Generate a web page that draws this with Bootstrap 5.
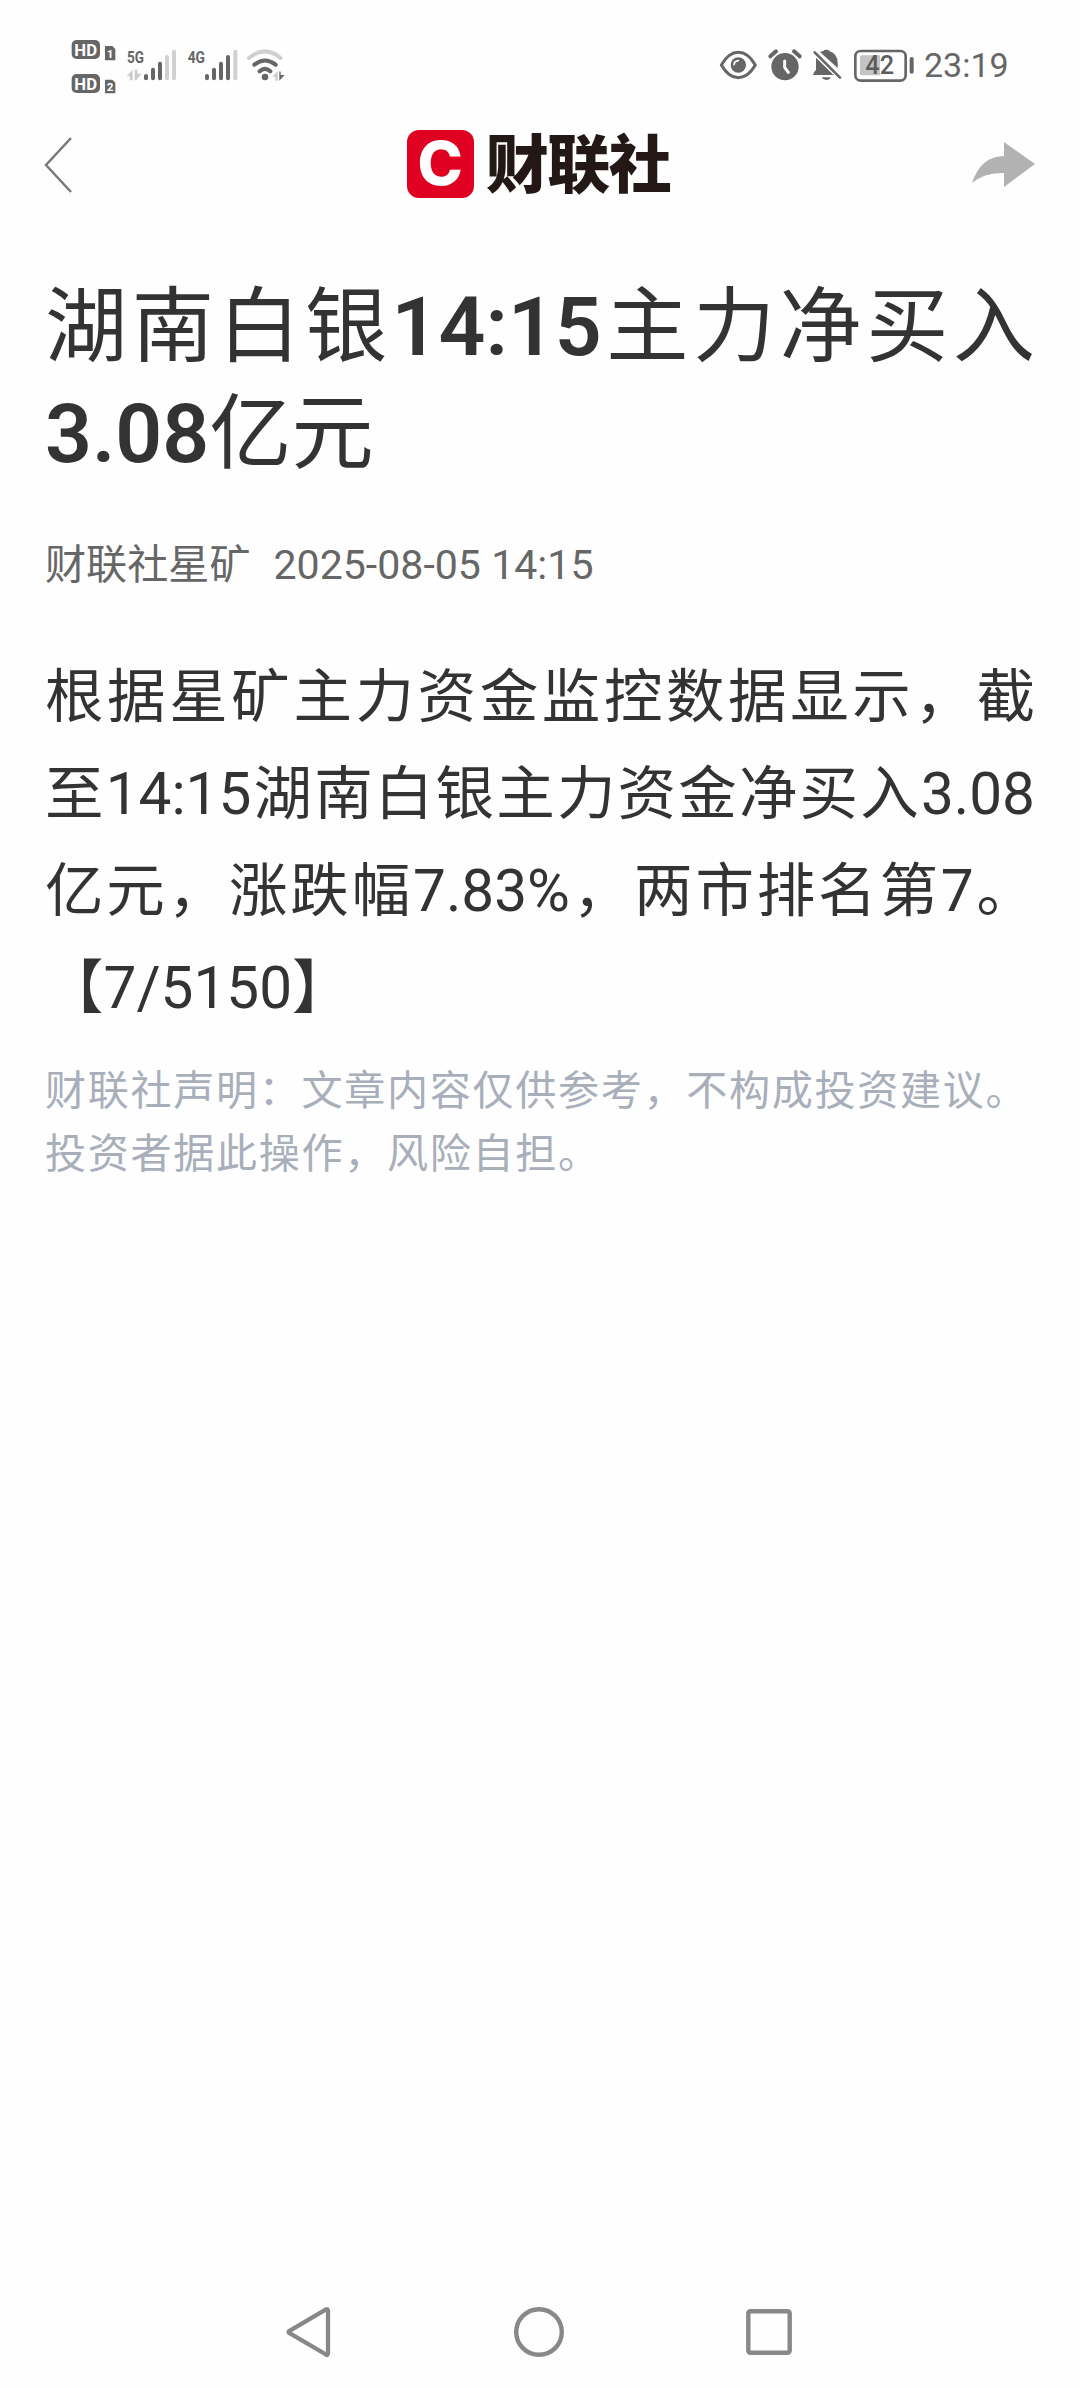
<!DOCTYPE html>
<html lang="zh-CN">
<head>
<meta charset="utf-8">
<meta name="viewport" content="width=device-width, initial-scale=1">
<title>湖南白银14:15主力净买入3.08亿元</title>
<link href="https://cdn.jsdelivr.net/npm/bootstrap@5.3.0/dist/css/bootstrap.min.css" rel="stylesheet">
<style>
body{font-family:Roboto,"Noto Sans CJK SC",sans-serif;background:#fefefe;color:#333;height:2388px;overflow:hidden}
svg{display:block;flex:none}
.status{height:100px;padding:30px 72px 0 70px;color:#666}
.clock{font-size:34px;line-height:71px;margin-left:9px;width:84px;white-space:nowrap}
.gap-bell{margin-left:7px}
.gap-batt{margin-left:11px}
.appbar{height:130px;padding:0 45px 0 44px}
.brand-box{margin:0 0 3px 19px}
.brand-c{width:67px;height:68px;border-radius:12px;background:#e00021;color:#fff;font:800 61px/67px Inter,"Liberation Sans",sans-serif}
.brand-name{font:900 63px/68px "Noto Sans CJK SC",sans-serif;color:#231815;margin:-7px 0 0 12px;letter-spacing:-1.5px}
.article{padding:44px 45px 0}
.headline{font-size:82.2px;line-height:106.9px;font-weight:400;margin:0;text-align:justify}
.headline b{font-weight:600}
.meta{font-size:41.1px;line-height:60px;margin-top:47px;gap:23px;color:#666}
.story{font-size:58.5px;line-height:97px;margin:54px 0 0;text-align:justify}
.notice{font-size:41.1px;line-height:63px;letter-spacing:1.66px;margin:23px -20px 0 0;color:#a9afba}
.sysnav{height:112px;gap:181px;padding-right:2px}
</style>
</head>
<body class="d-flex flex-column">
<div class="status d-flex justify-content-between">
  <div class="d-flex gap-2">
    <svg width="47" height="70" viewBox="30 0 141 210" fill="#666">
      <rect x="35" y="30" width="85" height="57" rx="15"/><rect x="35" y="132" width="85" height="57" rx="15"/>
      <path d="M135 48h22l9 9v34h-31zM135 149h22l9 9v32h-31z"/>
      <g fill="#fff" font-family="Roboto" font-weight="700"><text x="43" y="78" font-size="52" textLength="68" lengthAdjust="spacingAndGlyphs">HD</text><text x="43" y="180" font-size="52" textLength="68" lengthAdjust="spacingAndGlyphs">HD</text><text x="140" y="84" font-size="35">1</text><text x="140" y="184" font-size="35">2</text></g>
    </svg>
    <svg width="53" height="70" viewBox="195 0 159 210" fill="#666">
      <text x="201" y="98" font-family="Roboto" font-weight="700" font-size="52" textLength="51" lengthAdjust="spacingAndGlyphs">5G</text>
      <g stroke-width="12" stroke-linecap="round" stroke="#666"><path d="M258 138v7M279 119v26M300 101v44"/><path stroke="#d0d0d0" d="M321 81v64M342 65v80"/></g>
      <path fill="#ccc" d="M200 138l18-19v32h-9v-13zM224 119h8v12h13l-17 20h-4z"/>
    </svg>
    <svg width="52" height="70" viewBox="378 0 156 210" fill="#666">
      <text x="383" y="98" font-family="Roboto" font-weight="700" font-size="52" textLength="52" lengthAdjust="spacingAndGlyphs">4G</text>
      <g stroke-width="12" stroke-linecap="round" stroke="#666"><path d="M441 138v7M462 119v26M483 101v44M504 81v64"/><path stroke="#d0d0d0" d="M526 65v80"/></g>
    </svg>
    <svg width="40" height="70" viewBox="558 0 120 210">
      <g fill="none" stroke="#666" stroke-width="12" stroke-linecap="round"><path stroke="#d0d0d0" d="M567 84Q615 44 662 84"/><path d="M583 104Q615 79 647 104M599 124Q615 109 631 124"/></g>
      <circle cx="615" cy="141" r="10" fill="#666"/><path fill="#ccc" d="M637 140l16-16v28h-7v-12z"/><path fill="#666" d="M658 124l4 1v10h12l-16 17z"/>
    </svg>
  </div>
  <div class="d-flex">
    <svg width="38" height="70" viewBox="60 0 114 210"><path d="M67 105Q89 67 118 67t51 38Q147 143 118 143T67 105Z" fill="none" stroke="#666" stroke-width="9" stroke-linejoin="round"/><circle cx="118" cy="105" r="23" fill="#666"/><path d="M105 104q1-11 13-12" fill="none" stroke="#fff" stroke-width="5" stroke-linecap="round"/></svg>
    <svg class="ms-2" width="40" height="70" viewBox="198 0 120 210"><circle cx="258" cy="110" r="41" fill="#666"/><path d="M214 79l17-15M302 79l-17-15" stroke="#666" stroke-width="12" stroke-linecap="round"/><path d="M257 93v19l11 15" fill="none" stroke="#fff" stroke-width="9" stroke-linecap="round" stroke-linejoin="round"/></svg>
    <svg class="gap-bell" width="30" height="70" viewBox="339 0 90 210"><path fill="#666" d="M363 66q4-2 10-3q1-4 9-4t9 4q25 8 25 36v15zM351 83L404 135H342q0-8 9-15zM368 142h27q-3 8-13 8t-14-8z"/><path d="M347 67l76 76" stroke="#666" stroke-width="8" stroke-linecap="round"/></svg>
    <svg class="gap-batt" width="62" height="70" viewBox="462 0 186 210"><rect x="469" y="63" width="151" height="89" rx="16" fill="none" stroke="#666" stroke-width="8"/><path fill="#c4c4c4" d="M489 76h54v60h-54q-6 0-6-6V82q0-6 6-6z"/><path d="M638 87v38" stroke="#666" stroke-width="12" stroke-linecap="round"/><text x="499" y="132" font-family="Roboto" font-weight="500" font-size="76" fill="#5c5c5c" textLength="86" lengthAdjust="spacingAndGlyphs">42</text></svg>
    <div class="clock fw-normal">23:19</div>
  </div>
</div>
<header class="appbar d-flex align-items-center justify-content-between">
  <svg width="42" height="56" viewBox="0 0 42 56"><path d="M27 1L2 28 27 55" fill="none" stroke="#777" stroke-width="2.4"/></svg>
  <div class="brand-box d-flex align-items-center">
    <div class="brand-c text-center">C</div>
    <div class="brand-name">财联社</div>
  </div>
  <svg width="63" height="46" viewBox="0 0 63 46"><path fill="#b2b2b2" d="M32 0L63 22 32 45V31Q13 30 0 41Q9 14 32 14Z"/></svg>
</header>
<main class="article flex-grow-1">
  <h1 class="headline">湖南白银<b>14:15</b>主力净买入<b>3.08</b>亿元</h1>
  <div class="meta d-flex"><span>财联社星矿</span><span>2025-08-05 14:15</span></div>
  <p class="story">根据星矿主力资金监控数据显示，截至14:15湖南白银主力资金净买入3.08亿元，涨跌幅7.83%，两市排名第7。【7/5150】</p>
  <p class="notice">财联社声明：文章内容仅供参考，不构成投资建议。<br>投资者据此操作，风险自担。</p>
</main>
<nav class="sysnav d-flex justify-content-center align-items-center">
  <svg width="46" height="52" viewBox="0 0 46 52"><path d="M40 3.5Q42 2.500 42 5V47Q42 50 40 48.500L4 27.500Q1 26 4 24.500Z" fill="none" stroke="#888" stroke-width="4.300"/></svg>
  <svg width="52" height="52" viewBox="0 0 52 52"><circle cx="26" cy="26" r="22.800" fill="none" stroke="#888" stroke-width="4.400"/></svg>
  <svg width="46" height="52" viewBox="0 0 46 52"><rect x="2.300" y="5.300" width="41.400" height="41.400" rx="2" fill="none" stroke="#888" stroke-width="4.400"/></svg>
</nav>
<script src="https://cdn.jsdelivr.net/npm/bootstrap@5.3.0/dist/js/bootstrap.bundle.min.js"></script>
</body>
</html>
